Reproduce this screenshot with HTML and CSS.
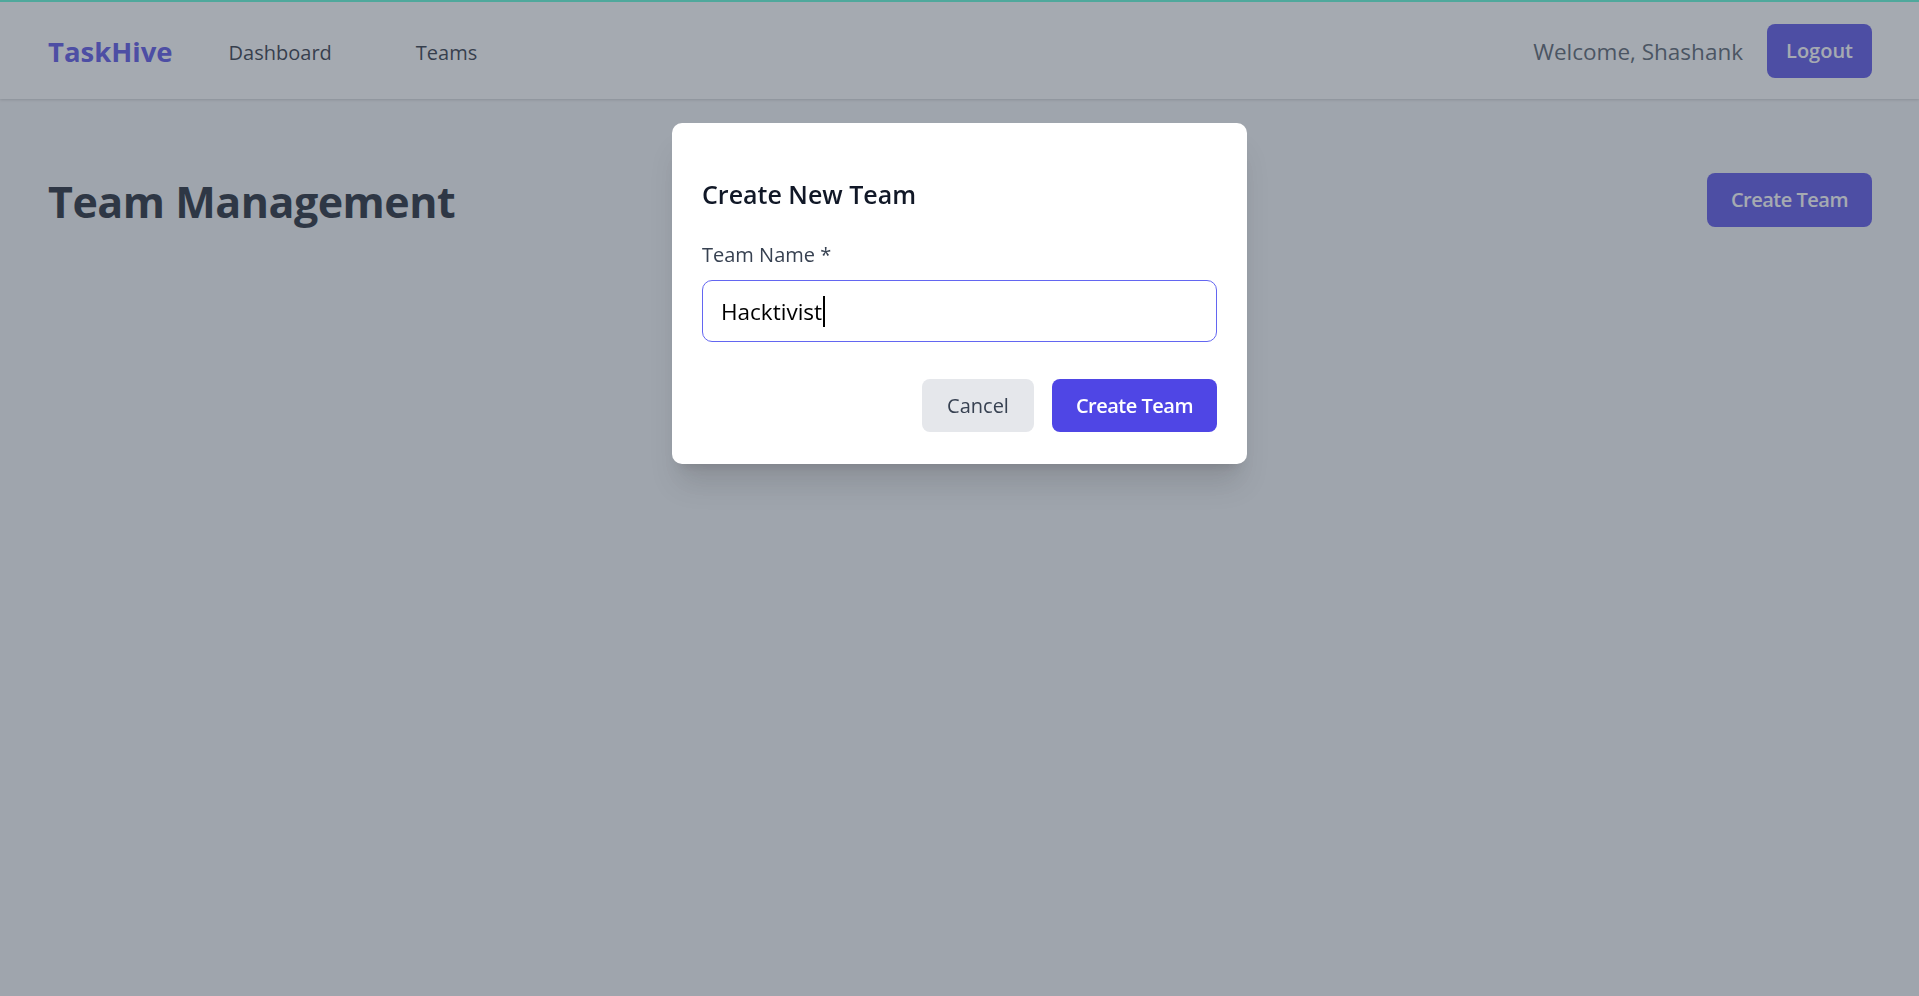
FILE: index.html
```html
<!DOCTYPE html>
<html lang="en">
<head>
<meta charset="utf-8">
<title>TaskHive - Teams</title>
<link rel="stylesheet" href="styles.css">
</head>
<body>
<div class="topline"></div>
<nav class="navbar">
  <div class="nav-left">
    <a class="logo" href="#">TaskHive</a>
    <div class="nav-links">
      <a href="#">Dashboard</a>
      <a href="#">Teams</a>
    </div>
  </div>
  <div class="nav-right">
    <span class="welcome">Welcome, Shashank</span>
    <button class="btn btn-primary btn-logout">Logout</button>
  </div>
</nav>
<main class="page">
  <div class="page-header">
    <h1>Team Management</h1>
    <button class="btn btn-primary">Create Team</button>
  </div>
</main>
<div class="overlay">
  <div class="modal">
    <h2>Create New Team</h2>
    <label class="field-label">Team Name *</label>
    <div class="text-input" role="textbox">Hacktivist<span class="caret"></span></div>
    <div class="modal-actions">
      <button class="btn btn-secondary">Cancel</button>
      <button class="btn btn-primary">Create Team</button>
    </div>
  </div>
</div>
</body>
</html>
```
FILE: styles.css
```css
* { box-sizing: border-box; }
html, body { margin: 0; padding: 0; }
body {
  font-family: "Open Sans", "Noto Sans", sans-serif;
  background: #f3f4f6;
  color: #111827;
  min-height: 996px;
}
a { text-decoration: none; }

.topline { height: 2px; background: #4fa89c; position: relative; z-index: 20; }

.navbar {
  height: 97px;
  background: #ffffff;
  display: flex;
  align-items: center;
  justify-content: space-between;
  padding: 0 47px 0 48px;
  box-shadow: 0 1px 3px rgba(0,0,0,0.12), 0 1px 2px rgba(0,0,0,0.06);
}
.nav-left { display: flex; align-items: center; padding-top: 2px; }
.logo {
  font-size: 27.5px;
  font-weight: 700;
  color: #4f46e5;
  line-height: 36px;
}
.nav-links { display: flex; gap: 84px; margin-left: 56px; padding-top: 2px; }
.nav-links a {
  font-size: 20px;
  font-weight: 500;
  color: #1f2937;
  line-height: 30px;
}
.nav-right { display: flex; align-items: center; gap: 24px; }
.welcome { font-size: 22.5px; color: #4b5563; line-height: 30px; padding-top: 3px; }

.btn {
  font-family: inherit;
  border: none;
  border-radius: 8px;
  height: 54px;
  padding: 0 24px;
  font-size: 20px;
  font-weight: 600;
  letter-spacing: -0.5px;
  line-height: 30px;
  cursor: pointer;
}
.btn-primary { background: #4f46e5; color: #ffffff; }
.btn-secondary { background: #e5e7eb; color: #374151; font-weight: 500; letter-spacing: 0; padding: 0 25px; }
.btn-logout { padding: 0 19px; letter-spacing: 0; }

.page { padding: 73px 47px 0 48px; }
.page-header { display: flex; align-items: center; justify-content: space-between; }
.page-header h1 {
  margin: 0;
  font-size: 43px;
  letter-spacing: -0.5px;
  line-height: 50px;
  font-weight: 700;
  color: #111827;
  padding-top: 5px;
}

.overlay {
  position: fixed;
  inset: 0;
  background: rgba(75, 85, 99, 0.5);
  display: flex;
  justify-content: center;
  align-items: flex-start;
  padding-top: 123px;
  z-index: 10;
}
.modal {
  width: 575px;
  background: #ffffff;
  border-radius: 10px;
  padding: 54px 30px 32px 30px;
  box-shadow: 0 25px 30px -6px rgba(0,0,0,0.12), 0 10px 12px -8px rgba(0,0,0,0.12);
}
.modal h2 {
  margin: 0 0 28px 0;
  font-size: 25px;
  line-height: 35px;
  font-weight: 600;
  color: #111827;
}
.field-label {
  display: block;
  font-size: 20px;
  line-height: 30px;
  font-weight: 500;
  color: #374151;
  margin-bottom: 10px;
}
.text-input {
  height: 62px;
  border: 1px solid #6366f1;
  border-radius: 10px;
  padding: 0 18px;
  display: flex;
  align-items: center;
  font-size: 22.5px;
  color: #000000;
}
.caret {
  display: inline-block;
  width: 2px;
  height: 31px;
  background: #000000;
  margin-left: 1px;
}
.modal-actions {
  margin-top: 37px;
  display: flex;
  justify-content: flex-end;
  gap: 18px;
}
.modal-actions .btn { height: 53px; }
```
